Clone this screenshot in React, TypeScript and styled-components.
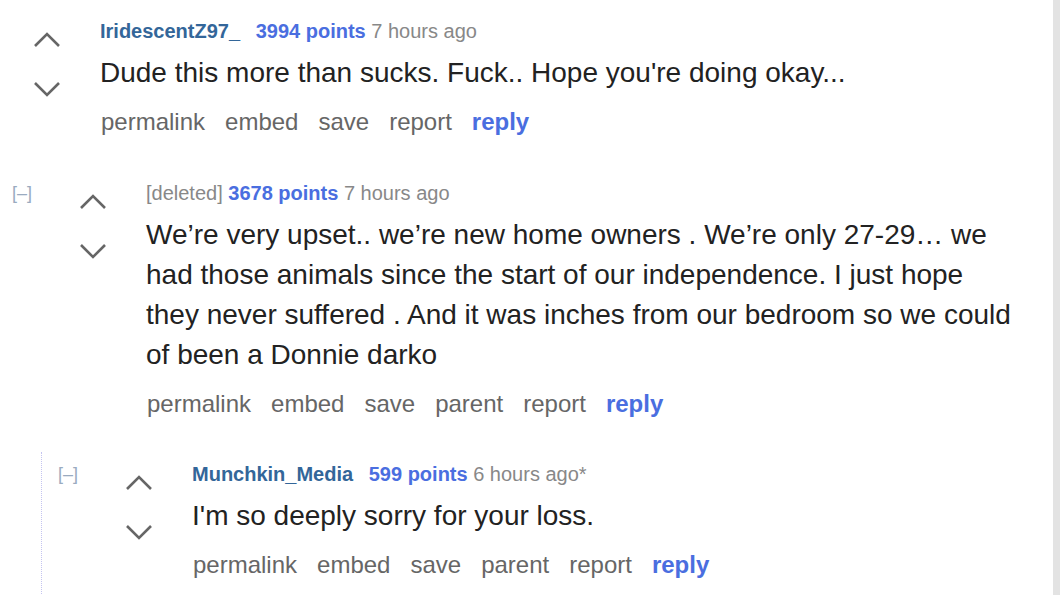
import { FC, ReactNode } from "react";
import styled, { createGlobalStyle } from "styled-components";

const GlobalStyle = createGlobalStyle`
	html, body {
		margin: 0;
		padding: 0;
		background: #fff;
	}
	body {
		font-family: "Liberation Sans", Arial, sans-serif;
	}
`;

const StyledPage = styled.div`
	display: flex;
	width: 100%;
	height: 595px;
	overflow: hidden;
`;

const StyledMain = styled.div`
	flex: 1;
	background: #fff;
	padding-top: 19px;
	padding-right: 39px;
`;

const StyledGutter = styled.div`
	width: 7px;
	background: #e3e3e3;
`;

const StyledComment = styled.div<{ $pad: number }>`
	display: flex;
	align-items: flex-start;
	padding-left: ${(p) => p.$pad}px;
`;

const StyledToggle = styled.span`
	width: 68px;
	flex: none;
	font-size: 18px;
	line-height: 24px;
	color: #9aabc0;
`;

const StyledVotes = styled.div`
	width: 66px;
	flex: none;
	display: flex;
	flex-direction: column;
	padding-top: 12px;
	gap: 31px;
`;

const StyledArrow = styled.svg`
	display: block;
	width: 28px;
	height: 18px;
	margin-left: -1px;
`;

const StyledEntry = styled.div`
	flex: 1;
	min-width: 0;
`;

const StyledMeta = styled.div`
	font-size: 20px;
	line-height: 24px;
	color: #888;
`;

const StyledAuthor = styled.span<{ $deleted?: boolean }>`
	color: ${(p) => (p.$deleted ? "#888" : "#336699")};
	font-weight: ${(p) => (p.$deleted ? "normal" : "bold")};
	margin-right: ${(p) => (p.$deleted ? 0 : 10)}px;
`;

const StyledScore = styled.span`
	color: #4a6ee0;
	font-weight: bold;
`;

const StyledBody = styled.div`
	margin-top: 10px;
	font-size: 28px;
	line-height: 40px;
	color: #222;
`;

const StyledActions = styled.ul`
	display: flex;
	gap: 20px;
	list-style: none;
	margin: 14px 0 0 1px;
	padding: 0;
	font-size: 24px;
	line-height: 30px;
`;

const StyledAction = styled.li<{ $primary?: boolean }>`
	color: ${(p) => (p.$primary ? "#4a6ee0" : "#666")};
	font-weight: ${(p) => (p.$primary ? "bold" : "normal")};
`;

const StyledChildren = styled.div`
	margin: 33px 0 0 29px;
	padding: 10px 0 0 16px;
	border-left: 1px dotted #c4c4f0;
	min-height: 200px;
`;

const Chevron: FC<{ down?: boolean }> = ({ down }) => (
	<StyledArrow viewBox="0 0 28 18">
		<polyline
			points={down ? "2,3 14,15 26,3" : "2,15 14,3 26,15"}
			fill="none"
			stroke="#666"
			strokeWidth="2.6"
		/>
	</StyledArrow>
);

type CommentProps = {
	author: string;
	deleted?: boolean;
	points: number;
	time: string;
	body: string;
	parent?: boolean;
	toggle?: boolean;
	pad?: number;
	children?: ReactNode;
};

const Comment: FC<CommentProps> = ({
	author,
	deleted,
	points,
	time,
	body,
	parent,
	toggle,
	pad = 0,
	children,
}) => {
	const actions = ["permalink", "embed", "save"];
	if (parent) actions.push("parent");
	actions.push("report");

	return (
		<div>
			<StyledComment $pad={pad}>
				{toggle && <StyledToggle>[–]</StyledToggle>}
				<StyledVotes>
					<Chevron />
					<Chevron down />
				</StyledVotes>
				<StyledEntry>
					<StyledMeta>
						<StyledAuthor $deleted={deleted}>{author}</StyledAuthor>{" "}
						<StyledScore>{points} points</StyledScore> {time}
					</StyledMeta>
					<StyledBody>{body}</StyledBody>
					<StyledActions>
						{actions.map((a) => (
							<StyledAction key={a}>{a}</StyledAction>
						))}
						<StyledAction $primary>reply</StyledAction>
					</StyledActions>
				</StyledEntry>
			</StyledComment>
			{children}
		</div>
	);
};

const StyledThread = styled.div`
	margin-top: 44px;
	padding-left: 12px;
`;

const App: FC = () => {
	return (
		<>
			<GlobalStyle />
			<StyledPage>
				<StyledMain>
					<Comment
						pad={34}
						author="IridescentZ97_"
						points={3994}
						time="7 hours ago"
						body="Dude this more than sucks. Fuck.. Hope you're doing okay..."
					/>
					<StyledThread>
						<Comment
							toggle
							deleted
							parent
							author="[deleted]"
							points={3678}
							time="7 hours ago"
							body="We’re very upset.. we’re new home owners . We’re only 27-29… we had those animals since the start of our independence. I just hope they never suffered . And it was inches from our bedroom so we could of been a Donnie darko"
						>
							<StyledChildren>
								<Comment
									toggle
									parent
									author="Munchkin_Media"
									points={599}
									time="6 hours ago*"
									body="I'm so deeply sorry for your loss."
								/>
							</StyledChildren>
						</Comment>
					</StyledThread>
				</StyledMain>
				<StyledGutter />
			</StyledPage>
		</>
	);
};

export default App;
